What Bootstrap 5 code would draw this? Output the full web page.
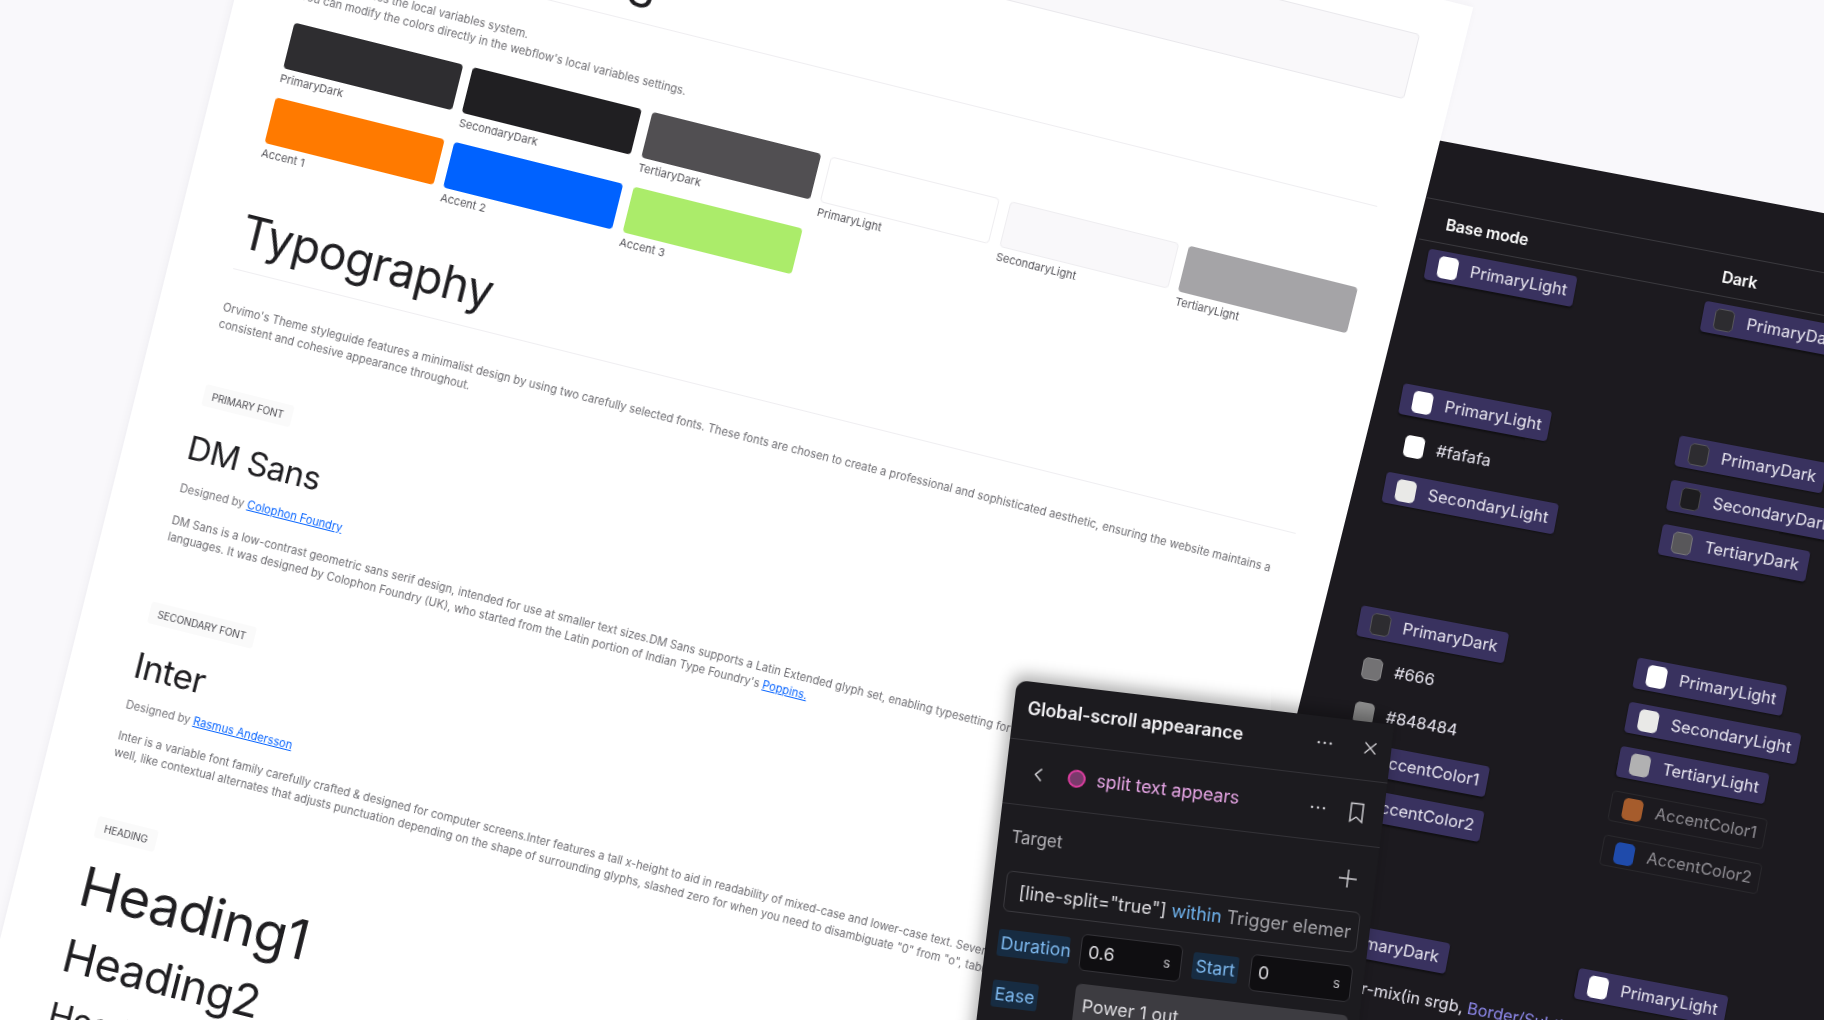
<!DOCTYPE html>
<html lang="en">
<head>
<meta charset="utf-8">
<title>Orvimo styleguide</title>
<link href="https://cdn.jsdelivr.net/npm/bootstrap@5.3.0/dist/css/bootstrap.min.css" rel="stylesheet">
<style>
html,body{height:100%;}
body{background:#f9f8fb;overflow:hidden;position:relative;font-family:"Inter","Liberation Sans",sans-serif;width:1824px;height:1020px;}
.scene-item{position:absolute;transform-origin:0 0;filter:blur(.45px);}

/* white styleguide sheet */
.sheet{left:305px;top:-284.5px;width:1204px;height:2000px;background:#fff;transform:rotate(14deg);z-index:2;padding:39px 45px 0 63.5px;box-shadow:-2px 0 8px rgba(60,50,80,.05);color:#1f1e21;}
.sheet-box{height:67px;background:#f9f8fa;border:1px solid #e9e8ec;border-radius:4px;}
.sheet-h{font-family:"Inter",sans-serif;font-weight:400;letter-spacing:-.5px;margin:0;color:#1f1e21;}
.h-xl{font-size:46.5px;line-height:57.6px;}
.h-top{font-size:48px;letter-spacing:0;}
.rule-a{border-bottom:1px solid #efeef1;}
.txt{font-size:11.2px;line-height:17px;color:#6e6d72;margin:0;white-space:nowrap;}
.swatch-grid{display:flex;flex-wrap:wrap;column-gap:10.5px;margin-right:-12px;}
.swatch-item{width:174px;height:77px;}
.swatch-fill{height:47px;border-radius:4px;}
.swatch-name{font-size:11px;line-height:14px;color:#55545a;margin-top:3px;}
.line-fill{border:1px solid #eeedf0;}
.font-tag{display:inline-block;height:22px;line-height:22px;padding:0 9px;font-size:10px;letter-spacing:-.1px;color:#4b4a50;background:#fafafa;border-radius:3px;text-transform:uppercase;}
.by-line{font-size:11.2px;line-height:17px;color:#77767b;margin:0;}
.by-line a,.txt a{color:#0a66ff;}
.h-font{font-size:33px;line-height:39.6px;margin-left:-2px;}
.h-font-b{font-size:35px;line-height:40px;margin-left:-1px;}
.h1x{font-size:54.5px;line-height:65px;}
.h2x{font-size:45px;line-height:52px;}
.h3x{font-size:34px;line-height:40px;}
.lower{margin-left:2px;}

/* dark variables table */
.dk-table{left:1241.4px;top:103.2px;width:1000px;height:1250px;background:#1c1a1f;transform:rotate(10.7deg);z-index:1;padding-left:200px;color:#fff;}
.dk-head{margin-top:58px;height:43px;border-top:1px solid #3a393e;border-bottom:1px solid #3a393e;}
.dk-title{font-size:16px;font-weight:600;letter-spacing:-.2px;}
.dk-col-a{width:293px;padding-left:11.5px;}
.dk-col-b{padding-left:0;}
.var-row{height:31px;margin-bottom:14px;padding-left:12px;display:flex;align-items:center;gap:13px;font-size:16.4px;color:#e8e6f0;border-radius:4px;width:max-content;min-width:150px;padding-right:8px;white-space:nowrap;}
.var-on{background:#39325f;box-shadow:0 1px 2px rgba(0,0,0,.4);}
.var-off{border:1px solid #29282c;color:#918f95;}
.var-dot{width:20px;height:22px;border-radius:5px;flex:none;}
.dot-l1{background:#fff;}
.dot-l2{background:#e9e9e7;}
.dot-l3{background:#b1b1b2;}
.dot-d1{background:#2d2c30;border:1px solid #56555a;}
.dot-d2{background:#1d1c1f;border:1px solid #4a494e;}
.dot-d3{background:#58575a;border:1px solid #77767a;}
.dot-666{background:#737274;border:1px solid #8a898b;}
.dot-848{background:#8c8c8c;}
.dot-a1{background:#a65c2c;}
.dot-a2{background:#1f4bab;}
.gap-137{margin-top:106px;}
.gap-136{margin-top:105px;}
.mix-row{gap:6px;margin-top:2px;}
.txt-ref{color:#8f8aee;margin-left:-2px;}

/* floating animation panel */
.fx-panel{left:1017px;top:680px;width:380px;height:470px;background:#1c1b1f;transform:rotate(6.8deg);z-index:3;border-radius:11px 0 0 0;box-shadow:-4px -6px 16px rgba(0,0,0,.32);color:#e4e3e7;}
.fx-title{height:59px;padding:0 14px 6px;border-bottom:1px solid #333237;}
.fx-title-t{font-size:18px;font-weight:600;letter-spacing:-.1px;color:#f1f0f3;}
.fx-nav{height:65px;padding:0 16px 0 28px;border-bottom:1px solid #333237;}
.fx-dot{width:18px;height:18px;border-radius:50%;background:#7a3a6c;border:2px solid #de3ea0;flex:none;}
.fx-name{font-size:17.9px;color:#e7a6e6;letter-spacing:-.1px;}
.fx-target{height:66px;padding:0 19px 0 13px;font-size:17px;color:#b4b3b8;}
.fx-field{margin:0 11px 0 13px;height:41px;border:1px solid #3a393e;border-radius:6px;padding:0 7px 0 13px;font-size:18px;color:#dddce0;}
.fx-field-in{white-space:nowrap;overflow:hidden;min-width:0;width:100%;}
.kw{color:#6fb2ec;}
.mut{color:#a6a5aa;}
.fx-row{padding:0 11px 0 12px;margin-top:13px;}
.fx-tag{background:#172c42;color:#7eb9ef;font-size:17.6px;height:27px;line-height:27px;padding:0 3px;border-radius:3px;flex:none;}
.fx-num{background:#0f0e11;border:1px solid #343338;border-radius:6px;height:37px;width:102px;padding:0 10px 0 7px;font-size:17.8px;color:#dddce0;flex:none;}
.fx-num-s{font-size:14px;color:#bdbcc0;}
.fx-sel{background:#3d3c41;border-radius:6px 6px 0 0;height:60px;flex:1 1 auto;padding:9px 8px;font-size:17.8px;color:#dddce0;}
.tw1{width:72px;text-align:center;}
.tw2{width:46px;text-align:center;}
.ic{display:block;flex:none;}
</style>
</head>
<body>

<section class="scene-item sheet">
  <div class="sheet-box"></div>
  <h2 class="sheet-h h-xl h-top" style="margin-top:39px">Colours Styling</h2>
  <div class="rule-a" style="height:14px"></div>
  <p class="txt" style="margin-top:30px">This theme uses the local variables system.<br>You can modify the colors directly in the webflow's local variables settings.</p>
  <div class="swatch-grid" style="margin-top:19px">
    <div class="swatch-item"><div class="swatch-fill" style="background:#2e2d30"></div><div class="swatch-name">PrimaryDark</div></div>
    <div class="swatch-item"><div class="swatch-fill" style="background:#201f22"></div><div class="swatch-name">SecondaryDark</div></div>
    <div class="swatch-item"><div class="swatch-fill" style="background:#514f52"></div><div class="swatch-name">TertiaryDark</div></div>
    <div class="swatch-item"><div class="swatch-fill line-fill" style="background:#fff"></div><div class="swatch-name">PrimaryLight</div></div>
    <div class="swatch-item"><div class="swatch-fill line-fill" style="background:#f9f8fa"></div><div class="swatch-name">SecondaryLight</div></div>
    <div class="swatch-item"><div class="swatch-fill" style="background:#a5a4a7"></div><div class="swatch-name">TertiaryLight</div></div>
    <div class="swatch-item"><div class="swatch-fill" style="background:#ff7a00"></div><div class="swatch-name">Accent 1</div></div>
    <div class="swatch-item"><div class="swatch-fill" style="background:#0062ff"></div><div class="swatch-name">Accent 2</div></div>
    <div class="swatch-item"><div class="swatch-fill" style="background:#abec6a"></div><div class="swatch-name">Accent 3</div></div>
  </div>
  <h2 class="sheet-h h-xl" style="margin-top:32px">Typography</h2>
  <div class="rule-a" style="height:11px"></div>
  <p class="txt" style="margin-top:31px">Orvimo's Theme styleguide features a minimalist design by using two carefully selected fonts. These fonts are chosen to create a professional and sophisticated aesthetic, ensuring the website maintains a<br>consistent and cohesive appearance throughout.</p>
  <div class="lower">
  <div style="margin-top:50px"><span class="font-tag">Primary font</span></div>
  <h3 class="sheet-h h-font" style="margin-top:24px">DM Sans</h3>
  <p class="by-line" style="margin-top:13px">Designed by <a href="#">Colophon Foundry</a></p>
  <p class="txt" style="margin-top:16px">DM Sans is a low-contrast geometric sans serif design, intended for use at smaller text sizes.DM Sans supports a Latin Extended glyph set, enabling typesetting for English and other Western European<br>languages. It was designed by Colophon Foundry (UK), who started from the Latin portion of Indian Type Foundry's <a href="#">Poppins.</a></p>
  <div style="margin-top:55px"><span class="font-tag">Secondary font</span></div>
  <h3 class="sheet-h h-font-b" style="margin-top:23px">Inter</h3>
  <p class="by-line" style="margin-top:13px">Designed by <a href="#">Rasmus Andersson</a></p>
  <p class="txt" style="margin-top:15px">Inter is a variable font family carefully crafted &amp; designed for computer screens.Inter features a tall x-height to aid in readability of mixed-case and lower-case text. Several OpenType features are provided as<br>well, like contextual alternates that adjusts punctuation depending on the shape of surrounding glyphs, slashed zero for when you need to disambiguate "0" from "o", tabular numbers, etc.</p>
  <div style="margin-top:54px"><span class="font-tag">Heading</span></div>
  <div class="sheet-h h1x" style="margin-top:17px">Heading1</div>
  <div class="sheet-h h2x" style="margin-top:13px">Heading2</div>
  <div class="sheet-h h3x" style="margin-top:15px">Heading3</div>
  </div>
</section>

<section class="scene-item dk-table">
  <div class="dk-head d-flex align-items-center">
    <div class="dk-title" style="width:305px;padding-left:24px;padding-top:3px">Base mode</div>
    <div class="dk-title" style="padding-top:3px">Dark</div>
  </div>
  <div class="d-flex" style="margin-top:7px">
    <div class="dk-col-a">
      <div class="var-row var-on"><span class="var-dot dot-l1"></span>PrimaryLight</div>
      <div class="var-row var-on gap-137"><span class="var-dot dot-l1"></span>PrimaryLight</div>
      <div class="var-row"><span class="var-dot dot-l1"></span>#fafafa</div>
      <div class="var-row var-on"><span class="var-dot dot-l2"></span>SecondaryLight</div>
      <div class="var-row var-on gap-136"><span class="var-dot dot-d1"></span>PrimaryDark</div>
      <div class="var-row"><span class="var-dot dot-666"></span>#666</div>
      <div class="var-row"><span class="var-dot dot-848"></span>#848484</div>
      <div class="var-row var-on"><span class="var-dot dot-a1"></span>AccentColor1</div>
      <div class="var-row var-on"><span class="var-dot dot-a2"></span>AccentColor2</div>
      <div class="var-row var-on gap-136"><span class="var-dot dot-d1"></span>PrimaryDark</div>
      <div class="var-row mix-row"><span class="var-dot dot-d3"></span>color-mix(in srgb,<span class="txt-ref">Border/Subtle</span></div>
    </div>
    <div class="dk-col-b">
      <div class="var-row var-on"><span class="var-dot dot-d1"></span>PrimaryDark</div>
      <div class="var-row var-on gap-137"><span class="var-dot dot-d1"></span>PrimaryDark</div>
      <div class="var-row var-on"><span class="var-dot dot-d2"></span>SecondaryDark</div>
      <div class="var-row var-on"><span class="var-dot dot-d3"></span>TertiaryDark</div>
      <div class="var-row var-on gap-136"><span class="var-dot dot-l1"></span>PrimaryLight</div>
      <div class="var-row var-on"><span class="var-dot dot-l2"></span>SecondaryLight</div>
      <div class="var-row var-on"><span class="var-dot dot-l3"></span>TertiaryLight</div>
      <div class="var-row var-off"><span class="var-dot dot-a1"></span>AccentColor1</div>
      <div class="var-row var-off"><span class="var-dot dot-a2"></span>AccentColor2</div>
      <div class="var-row var-on gap-136"><span class="var-dot dot-l1"></span>PrimaryLight</div>
    </div>
  </div>
</section>

<section class="scene-item fx-panel">
  <div class="fx-title d-flex align-items-center justify-content-between">
    <div class="fx-title-t">Global-scroll appearance</div>
    <div class="d-flex align-items-center" style="gap:31px">
      <svg class="ic" width="16" height="4" viewBox="0 0 16 4" fill="#c9c8cc"><circle cx="2" cy="2" r="1.3"/><circle cx="8" cy="2" r="1.3"/><circle cx="14" cy="2" r="1.3"/></svg>
      <svg class="ic" width="14" height="14" viewBox="0 0 14 14" fill="none" stroke="#d4d3d7" stroke-width="1.3"><path d="M1.5 1.5l11 11M12.5 1.5l-11 11"/></svg>
    </div>
  </div>
  <div class="fx-nav d-flex align-items-center">
    <svg class="ic" width="9" height="15" viewBox="0 0 9 15" fill="none" stroke="#d4d3d7" stroke-width="1.5"><path d="M7.5 1.5L1.5 7.5l6 6"/></svg>
    <span class="fx-dot" style="margin-left:25px"></span>
    <span class="fx-name" style="margin-left:11px">split text appears</span>
    <svg class="ic ms-auto" style="margin-right:1px" width="16" height="4" viewBox="0 0 16 4" fill="#c9c8cc"><circle cx="2" cy="2" r="1.3"/><circle cx="8" cy="2" r="1.3"/><circle cx="14" cy="2" r="1.3"/></svg>
    <svg class="ic" style="margin-left:22px;margin-right:3px" width="16" height="21" viewBox="0 0 16 21" fill="none" stroke="#d4d3d7" stroke-width="1.4"><path d="M2 1.5h12v18l-6-4.5-6 4.5z"/></svg>
  </div>
  <div class="fx-target d-flex align-items-center justify-content-between">
    <span>Target</span>
    <svg class="ic" style="margin-top:2px" width="18" height="18" viewBox="0 0 18 18" fill="none" stroke="#d4d3d7" stroke-width="1.4"><path d="M9 0v18M0 9h18"/></svg>
  </div>
  <div class="fx-field d-flex align-items-center"><div class="fx-field-in">[line-split="true"]&nbsp;<span class="kw">within</span>&nbsp;<span class="mut">Trigger element</span></div></div>
  <div class="fx-row d-flex align-items-center">
    <span class="fx-tag tw1">Duration</span>
    <div class="fx-num d-flex align-items-center justify-content-between" style="margin-left:11px"><span>0.6</span><span class="fx-num-s">s</span></div>
    <span class="fx-tag tw2" style="margin-left:11px">Start</span>
    <div class="fx-num d-flex align-items-center justify-content-between" style="margin-left:12px"><span>0</span><span class="fx-num-s">s</span></div>
  </div>
  <div class="fx-row d-flex align-items-start">
    <span class="fx-tag tw2" style="margin-top:6px">Ease</span>
    <div class="fx-sel" style="margin-left:37px">Power 1 out</div>
  </div>
</section>

<script src="https://cdn.jsdelivr.net/npm/bootstrap@5.3.0/dist/js/bootstrap.bundle.min.js"></script>
</body>
</html>
